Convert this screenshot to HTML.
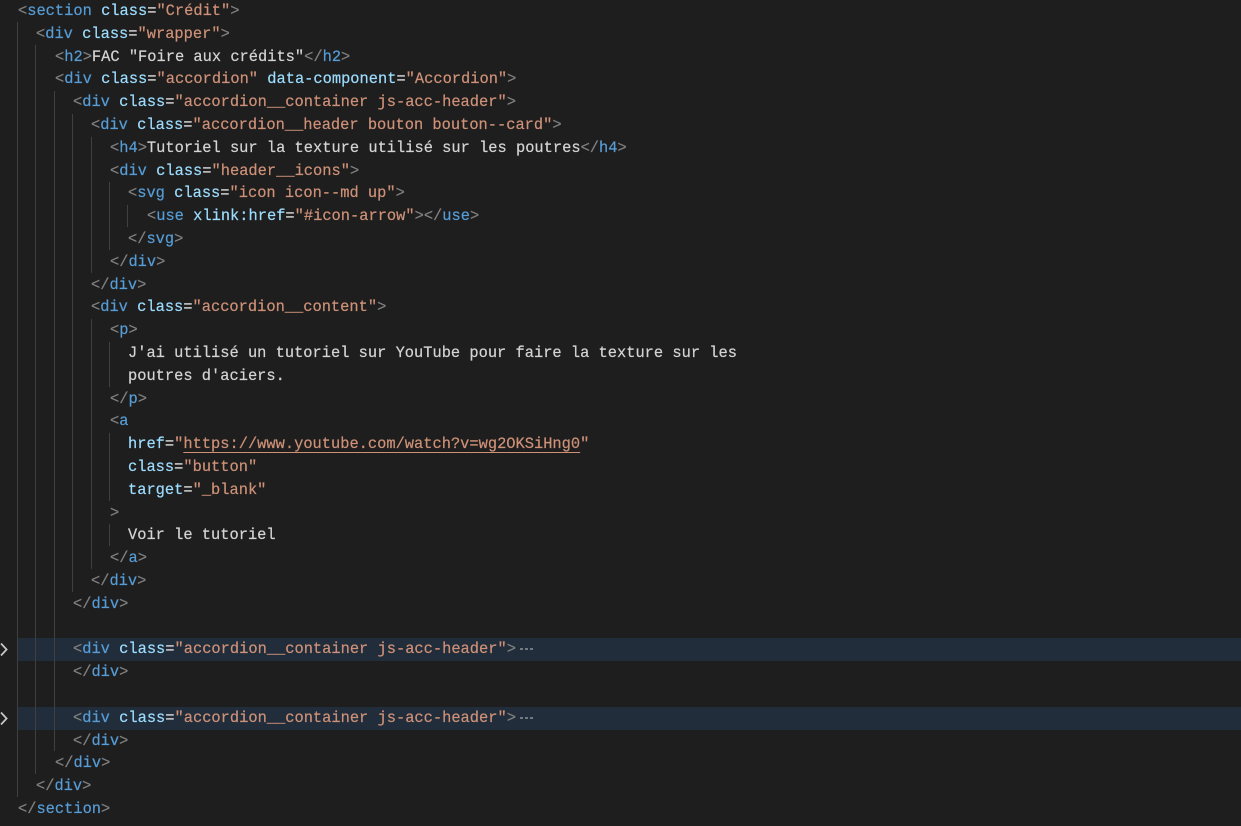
<!DOCTYPE html>
<html lang="fr">
<head>
<meta charset="utf-8">
<title>Code</title>
<style>
html,body{margin:0;padding:0;background:#1e1e1e;}
#e{position:relative;width:1241px;height:826px;overflow:hidden;background:#1e1e1e;font-family:"Liberation Mono",monospace;font-size:15.38px;color:#d4d4d4;-webkit-text-stroke:0.2px;}
.l{position:absolute;left:0;height:23px;line-height:23px;white-space:pre;margin-top:1px;}
.g{position:absolute;width:1px;background:#404040;}
.h{position:absolute;left:17px;right:0;height:23px;background:#212d3a;}
.b{color:#808080}.t{color:#569cd6}.a{color:#9cdcfe}.s{color:#ce9178}.u{text-decoration:underline;text-decoration-thickness:1px;text-underline-offset:4px;}
svg{position:absolute;left:0;}
.d{position:absolute;width:3px;height:2px;background:#6f7a82;}
</style>
</head>
<body>
<div id="e">
<div class="h" style="top:638px"></div>
<div class="h" style="top:707px"></div>

<div class="g" style="left:17px;top:22px;height:775px"></div>
<div class="g" style="left:35px;top:45px;height:729px"></div>
<div class="g" style="left:54px;top:91px;height:660px"></div>
<div class="g" style="left:72px;top:114px;height:478px"></div>
<div class="g" style="left:91px;top:137px;height:136px"></div>
<div class="g" style="left:91px;top:319px;height:250px"></div>
<div class="g" style="left:109px;top:182px;height:68px"></div>
<div class="g" style="left:109px;top:342px;height:45px"></div>
<div class="g" style="left:109px;top:433px;height:68px"></div>
<div class="g" style="left:109px;top:524px;height:22px"></div>
<div class="g" style="left:127px;top:205px;height:22px"></div>

<div class="l" style="top:-1px;left:18px"><span class="b">&lt;</span><span class="t">section</span> <span class="a">class</span>=<span class="s">"Crédit"</span><span class="b">&gt;</span></div>
<div class="l" style="top:22px;left:36px"><span class="b">&lt;</span><span class="t">div</span> <span class="a">class</span>=<span class="s">"wrapper"</span><span class="b">&gt;</span></div>
<div class="l" style="top:45px;left:55px"><span class="b">&lt;</span><span class="t">h2</span><span class="b">&gt;</span>FAC "Foire aux crédits"<span class="b">&lt;/</span><span class="t">h2</span><span class="b">&gt;</span></div>
<div class="l" style="top:67px;left:55px"><span class="b">&lt;</span><span class="t">div</span> <span class="a">class</span>=<span class="s">"accordion"</span> <span class="a">data-component</span>=<span class="s">"Accordion"</span><span class="b">&gt;</span></div>
<div class="l" style="top:90px;left:73px"><span class="b">&lt;</span><span class="t">div</span> <span class="a">class</span>=<span class="s">"accordion__container js-acc-header"</span><span class="b">&gt;</span></div>
<div class="l" style="top:113px;left:91px"><span class="b">&lt;</span><span class="t">div</span> <span class="a">class</span>=<span class="s">"accordion__header bouton bouton--card"</span><span class="b">&gt;</span></div>
<div class="l" style="top:136px;left:110px"><span class="b">&lt;</span><span class="t">h4</span><span class="b">&gt;</span>Tutoriel sur la texture utilisé sur les poutres<span class="b">&lt;/</span><span class="t">h4</span><span class="b">&gt;</span></div>
<div class="l" style="top:159px;left:110px"><span class="b">&lt;</span><span class="t">div</span> <span class="a">class</span>=<span class="s">"header__icons"</span><span class="b">&gt;</span></div>
<div class="l" style="top:181px;left:128px"><span class="b">&lt;</span><span class="t">svg</span> <span class="a">class</span>=<span class="s">"icon icon--md up"</span><span class="b">&gt;</span></div>
<div class="l" style="top:204px;left:147px"><span class="b">&lt;</span><span class="t">use</span> <span class="a">xlink:href</span>=<span class="s">"#icon-arrow"</span><span class="b">&gt;&lt;/</span><span class="t">use</span><span class="b">&gt;</span></div>
<div class="l" style="top:227px;left:128px"><span class="b">&lt;/</span><span class="t">svg</span><span class="b">&gt;</span></div>
<div class="l" style="top:250px;left:110px"><span class="b">&lt;/</span><span class="t">div</span><span class="b">&gt;</span></div>
<div class="l" style="top:273px;left:91px"><span class="b">&lt;/</span><span class="t">div</span><span class="b">&gt;</span></div>
<div class="l" style="top:295px;left:91px"><span class="b">&lt;</span><span class="t">div</span> <span class="a">class</span>=<span class="s">"accordion__content"</span><span class="b">&gt;</span></div>
<div class="l" style="top:318px;left:110px"><span class="b">&lt;</span><span class="t">p</span><span class="b">&gt;</span></div>
<div class="l" style="top:341px;left:128px">J'ai utilisé un tutoriel sur YouTube pour faire la texture sur les</div>
<div class="l" style="top:364px;left:128px">poutres d'aciers.</div>
<div class="l" style="top:387px;left:110px"><span class="b">&lt;/</span><span class="t">p</span><span class="b">&gt;</span></div>
<div class="l" style="top:409px;left:110px"><span class="b">&lt;</span><span class="t">a</span></div>
<div class="l" style="top:432px;left:128px"><span class="a">href</span>=<span class="s">"<span class="u">https://www.youtube.com/watch?v=wg2OKSiHng0</span>"</span></div>
<div class="l" style="top:455px;left:128px"><span class="a">class</span>=<span class="s">"button"</span></div>
<div class="l" style="top:478px;left:128px"><span class="a">target</span>=<span class="s">"_blank"</span></div>
<div class="l" style="top:501px;left:110px"><span class="b">&gt;</span></div>
<div class="l" style="top:523px;left:128px">Voir le tutoriel</div>
<div class="l" style="top:546px;left:110px"><span class="b">&lt;/</span><span class="t">a</span><span class="b">&gt;</span></div>
<div class="l" style="top:569px;left:91px"><span class="b">&lt;/</span><span class="t">div</span><span class="b">&gt;</span></div>
<div class="l" style="top:592px;left:73px"><span class="b">&lt;/</span><span class="t">div</span><span class="b">&gt;</span></div>
<div class="l" style="top:637px;left:73px"><span class="b">&lt;</span><span class="t">div</span> <span class="a">class</span>=<span class="s">"accordion__container js-acc-header"</span><span class="b">&gt;</span></div>
<div class="l" style="top:660px;left:73px"><span class="b">&lt;/</span><span class="t">div</span><span class="b">&gt;</span></div>
<div class="l" style="top:706px;left:73px"><span class="b">&lt;</span><span class="t">div</span> <span class="a">class</span>=<span class="s">"accordion__container js-acc-header"</span><span class="b">&gt;</span></div>
<div class="l" style="top:729px;left:73px"><span class="b">&lt;/</span><span class="t">div</span><span class="b">&gt;</span></div>
<div class="l" style="top:751px;left:55px"><span class="b">&lt;/</span><span class="t">div</span><span class="b">&gt;</span></div>
<div class="l" style="top:774px;left:36px"><span class="b">&lt;/</span><span class="t">div</span><span class="b">&gt;</span></div>
<div class="l" style="top:797px;left:18px"><span class="b">&lt;/</span><span class="t">section</span><span class="b">&gt;</span></div>

<div class="d" style="left:520px;top:648px"></div><div class="d" style="left:525px;top:648px"></div><div class="d" style="left:530px;top:648px"></div>
<div class="d" style="left:520px;top:717px"></div><div class="d" style="left:525px;top:717px"></div><div class="d" style="left:530px;top:717px"></div>

<svg style="top:642px" width="10" height="15" viewBox="0 0 10 15"><path d="M1 1.5 L6.6 7.5 L1 13.5" fill="none" stroke="#c5c5c5" stroke-width="1.8"/></svg>
<svg style="top:711px" width="10" height="15" viewBox="0 0 10 15"><path d="M1 1.5 L6.6 7.5 L1 13.5" fill="none" stroke="#c5c5c5" stroke-width="1.8"/></svg>
</div>
</body>
</html>
